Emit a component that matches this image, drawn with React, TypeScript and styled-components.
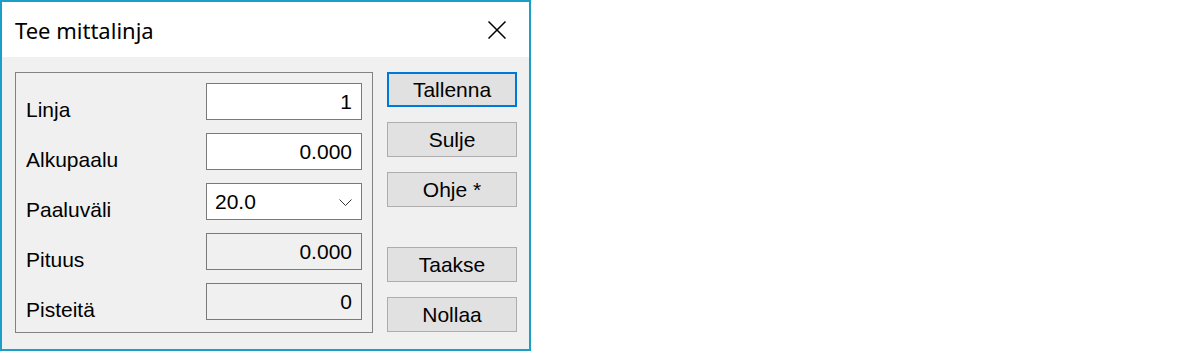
import React from 'react'
import styled, { createGlobalStyle } from 'styled-components'

const GlobalStyle = createGlobalStyle`
    html, body {
        margin: 0;
        padding: 0;
        background: #ffffff;
    }
    * {
        box-sizing: border-box;
    }
`

const fields = [
    { label: 'Linja', value: '1', kind: 'edit' },
    { label: 'Alkupaalu', value: '0.000', kind: 'edit' },
    { label: 'Paaluväli', value: '20.0', kind: 'combo' },
    { label: 'Pituus', value: '0.000', kind: 'readonly' },
    { label: 'Pisteitä', value: '0', kind: 'readonly' },
]

const buttons = [
    { text: 'Tallenna', focused: true, spaced: false },
    { text: 'Sulje', focused: false, spaced: false },
    { text: 'Ohje *', focused: false, spaced: false },
    { text: 'Taakse', focused: false, spaced: true },
    { text: 'Nollaa', focused: false, spaced: false },
]

const App = () => {
    return (
        <>
            <GlobalStyle />
            <Window>
                <TitleBar>
                    <Title>Tee mittalinja</Title>
                    <CloseButton>
                        <svg width="18" height="18" viewBox="0 0 18 18">
                            <path d="M0.5 0.5 L17.5 17.5 M17.5 0.5 L0.5 17.5" stroke="#000" strokeWidth="1.5" fill="none" />
                        </svg>
                    </CloseButton>
                </TitleBar>
                <Client>
                    <GroupBox>
                        {fields.map((f) => (
                            <React.Fragment key={f.label}>
                                <Label>{f.label}</Label>
                                {f.kind === 'combo' ? (
                                    <Combo>
                                        <span>{f.value}</span>
                                        <svg width="13" height="7" viewBox="0 0 13 7">
                                            <path d="M0.5 0.5 L6.5 6.5 L12.5 0.5" stroke="#333" strokeWidth="1" fill="none" />
                                        </svg>
                                    </Combo>
                                ) : (
                                    <Field $readOnly={f.kind === 'readonly'}>{f.value}</Field>
                                )}
                            </React.Fragment>
                        ))}
                    </GroupBox>
                    <ButtonColumn>
                        {buttons.map((b) => (
                            <Button key={b.text} $focused={b.focused} $spaced={b.spaced}>
                                {b.text}
                            </Button>
                        ))}
                    </ButtonColumn>
                </Client>
            </Window>
        </>
    )
}

export default App

const Window = styled.div`
    width: 531px;
    height: 351px;
    border: 2px solid #1c9fc6;
    display: flex;
    flex-direction: column;
    background: #f0f0f0;
`

const TitleBar = styled.div`
    height: 55px;
    background: #ffffff;
    display: flex;
    align-items: center;
    justify-content: space-between;
    padding-left: 13px;
    padding-right: 23px;
`

const Title = styled.div`
    font-family: 'Noto Sans', sans-serif;
    font-size: 22px;
    line-height: 30px;
    color: #000000;
`

const CloseButton = styled.div`
    width: 18px;
    height: 18px;
    display: flex;
    svg {
        display: block;
    }
`

const Client = styled.div`
    flex: 1;
    display: flex;
    align-items: flex-start;
    padding: 15px 0 0 13px;
    gap: 14px;
    font-family: 'Liberation Sans', Arial, sans-serif;
    font-size: 21px;
    color: #000000;
`

const GroupBox = styled.div`
    width: 358px;
    height: 261px;
    border: 1px solid #828282;
    display: grid;
    grid-template-columns: 180px 156px;
    grid-auto-rows: 37px;
    row-gap: 13px;
    padding: 10px 0 0 10px;
`

const Label = styled.div`
    line-height: 24px;
    padding-top: 15px;
    white-space: nowrap;
`

const Field = styled.div<{ $readOnly: boolean }>`
    height: 37px;
    border: 1px solid #7a7a7a;
    background: ${(p) => (p.$readOnly ? '#f0f0f0' : '#ffffff')};
    display: flex;
    align-items: center;
    justify-content: flex-end;
    padding-right: 9px;
    line-height: 24px;
`

const Combo = styled.div`
    height: 37px;
    border: 1px solid #7a7a7a;
    background: #ffffff;
    display: flex;
    align-items: center;
    justify-content: space-between;
    padding: 0 9px 0 8px;
    line-height: 24px;
    svg {
        display: block;
        margin-top: 1px;
    }
`

const ButtonColumn = styled.div`
    display: flex;
    flex-direction: column;
    gap: 15px;
`

const Button = styled.div<{ $focused: boolean; $spaced: boolean }>`
    width: 130px;
    height: 35px;
    background: #e1e1e1;
    border: ${(p) => (p.$focused ? '2px solid #0078d7' : '1px solid #adadad')};
    display: flex;
    align-items: center;
    justify-content: center;
    line-height: 24px;
    margin-top: ${(p) => (p.$spaced ? '25px' : '0')};
`
